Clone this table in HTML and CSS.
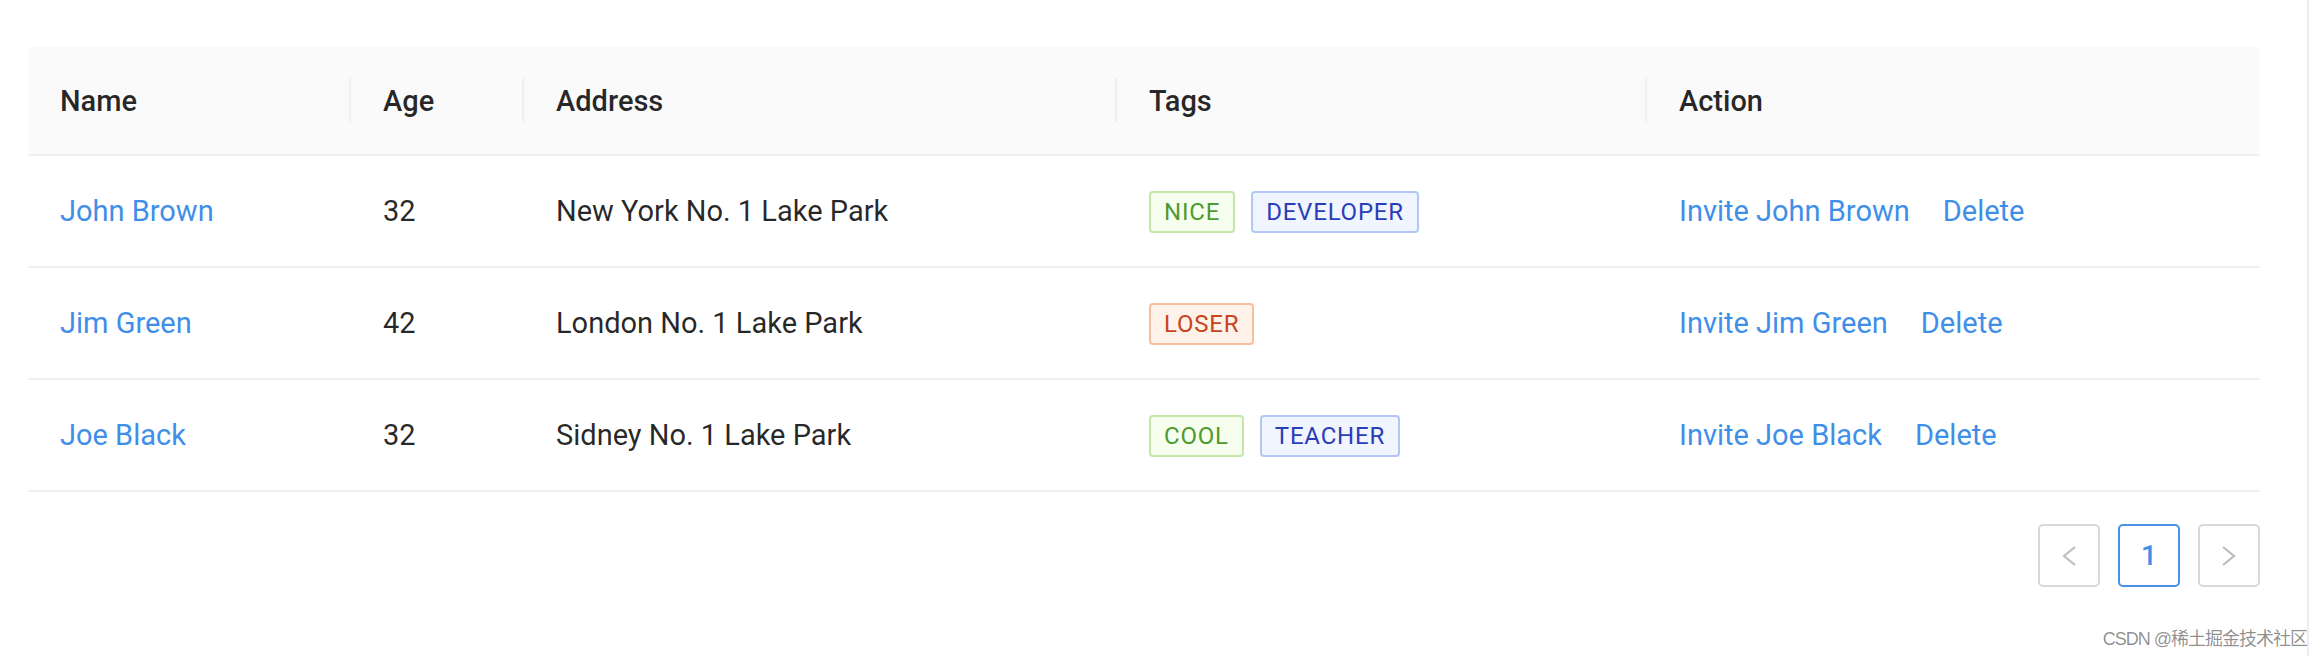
FILE: index.html
```html
<!DOCTYPE html>
<html lang="en">
<head>
<meta charset="utf-8">
<title>Table</title>
<link rel="stylesheet" href="styles.css">
</head>
<body>
<div class="page">
  <main class="content">
    <table class="table">
      <colgroup>
        <col class="c-name"><col class="c-age"><col class="c-addr"><col class="c-tags"><col class="c-action">
      </colgroup>
      <thead>
        <tr>
          <th class="sep">Name</th>
          <th class="sep">Age</th>
          <th class="sep">Address</th>
          <th class="sep">Tags</th>
          <th>Action</th>
        </tr>
      </thead>
      <tbody>
        <tr>
          <td><a class="link">John Brown</a></td>
          <td>32</td>
          <td>New York No. 1 Lake Park</td>
          <td><span class="tag tag-green">NICE</span><span class="tag tag-geekblue">DEVELOPER</span></td>
          <td><div class="actions"><a class="link">Invite John Brown</a><a class="link">Delete</a></div></td>
        </tr>
        <tr>
          <td><a class="link">Jim Green</a></td>
          <td>42</td>
          <td>London No. 1 Lake Park</td>
          <td><span class="tag tag-volcano">LOSER</span></td>
          <td><div class="actions"><a class="link">Invite Jim Green</a><a class="link">Delete</a></div></td>
        </tr>
        <tr>
          <td><a class="link">Joe Black</a></td>
          <td>32</td>
          <td>Sidney No. 1 Lake Park</td>
          <td><span class="tag tag-green">COOL</span><span class="tag tag-geekblue">TEACHER</span></td>
          <td><div class="actions"><a class="link">Invite Joe Black</a><a class="link">Delete</a></div></td>
        </tr>
      </tbody>
    </table>
    <nav class="pagination">
      <span class="page-item disabled"><svg width="16" height="22" viewBox="0 0 16 22"><path d="M14 2 L3 11 L14 20" fill="none" stroke="currentColor" stroke-width="2.2" stroke-linejoin="miter"/></svg></span>
      <span class="page-item active">1</span>
      <span class="page-item disabled"><svg width="16" height="22" viewBox="0 0 16 22"><path d="M2 2 L13 11 L2 20" fill="none" stroke="currentColor" stroke-width="2.2" stroke-linejoin="miter"/></svg></span>
    </nav>
  </main>
  <div class="edge">
    <div class="watermark">CSDN @稀土掘金技术社区</div>
  </div>
</div>
</body>
</html>
```
FILE: styles.css
```css
html, body {
  margin: 0;
  padding: 0;
  background: #ffffff;
}
body {
  font-family: Roboto, "Noto Sans", "Liberation Sans", sans-serif;
  color: rgba(0, 0, 0, 0.85);
  font-size: 29px;
}
.page {
  display: flex;
  width: 2314px;
  height: 656px;
  overflow: hidden;
}
.content {
  width: 2232px;
  margin-left: 28px;
  padding-top: 47px;
}
.table {
  width: 2232px;
  border-collapse: collapse;
  table-layout: fixed;
}
.c-name { width: 323px; }
.c-age { width: 173px; }
.c-addr { width: 593px; }
.c-tags { width: 530px; }
.c-action { width: 613px; }
th, td {
  text-align: left;
  padding: 0 32px;
  border-bottom: 2px solid #f0f0f0;
  line-height: 40px;
}
th {
  height: 107px;
  background: #fafafa;
  font-weight: 500;
  color: rgba(0, 0, 0, 0.85);
  position: relative;
}
th.sep::after {
  content: "";
  position: absolute;
  right: 0;
  top: 31px;
  width: 2px;
  height: 44px;
  background: #efefef;
}
td {
  height: 110px;
}
.link {
  color: #3f8fe8;
  text-decoration: none;
}
.actions {
  display: flex;
  gap: 33px;
}
.tag {
  display: inline-block;
  font-size: 24px;
  letter-spacing: 0.8px;
  line-height: 38px;
  padding: 0 13px;
  border: 2px solid;
  border-radius: 4px;
  margin-right: 16px;
  vertical-align: middle;
}
.tag-green {
  color: #4e9a32;
  background: #f6ffed;
  border-color: #c3e6a9;
}
.tag-geekblue {
  color: #2a3db8;
  background: #f0f5ff;
  border-color: #b3c8f6;
}
.tag-volcano {
  color: #c9431d;
  background: #fff2e8;
  border-color: #f5bfa0;
}
.pagination {
  display: flex;
  justify-content: flex-end;
  gap: 18px;
  margin-top: 32px;
}
.page-item {
  box-sizing: border-box;
  width: 62px;
  height: 63px;
  border: 2px solid #d9d9d9;
  border-radius: 5px;
  display: flex;
  align-items: center;
  justify-content: center;
  font-size: 28px;
  font-weight: 500;
}
.page-item.disabled {
  color: #bdbdbd;
}
.page-item.active {
  border-color: #4a91e6;
  color: #3f8fe8;
}
.edge {
  margin-left: auto;
  margin-right: 5px;
  width: 0;
  border-left: 2px solid #ededed;
  position: relative;
}
.watermark {
  position: absolute;
  right: 2px;
  top: 624px;
  font-family: "Liberation Sans", "Noto Sans CJK SC", sans-serif;
  font-size: 18px;
  letter-spacing: -1px;
  color: rgba(0, 0, 0, 0.45);
  white-space: nowrap;
}
```
